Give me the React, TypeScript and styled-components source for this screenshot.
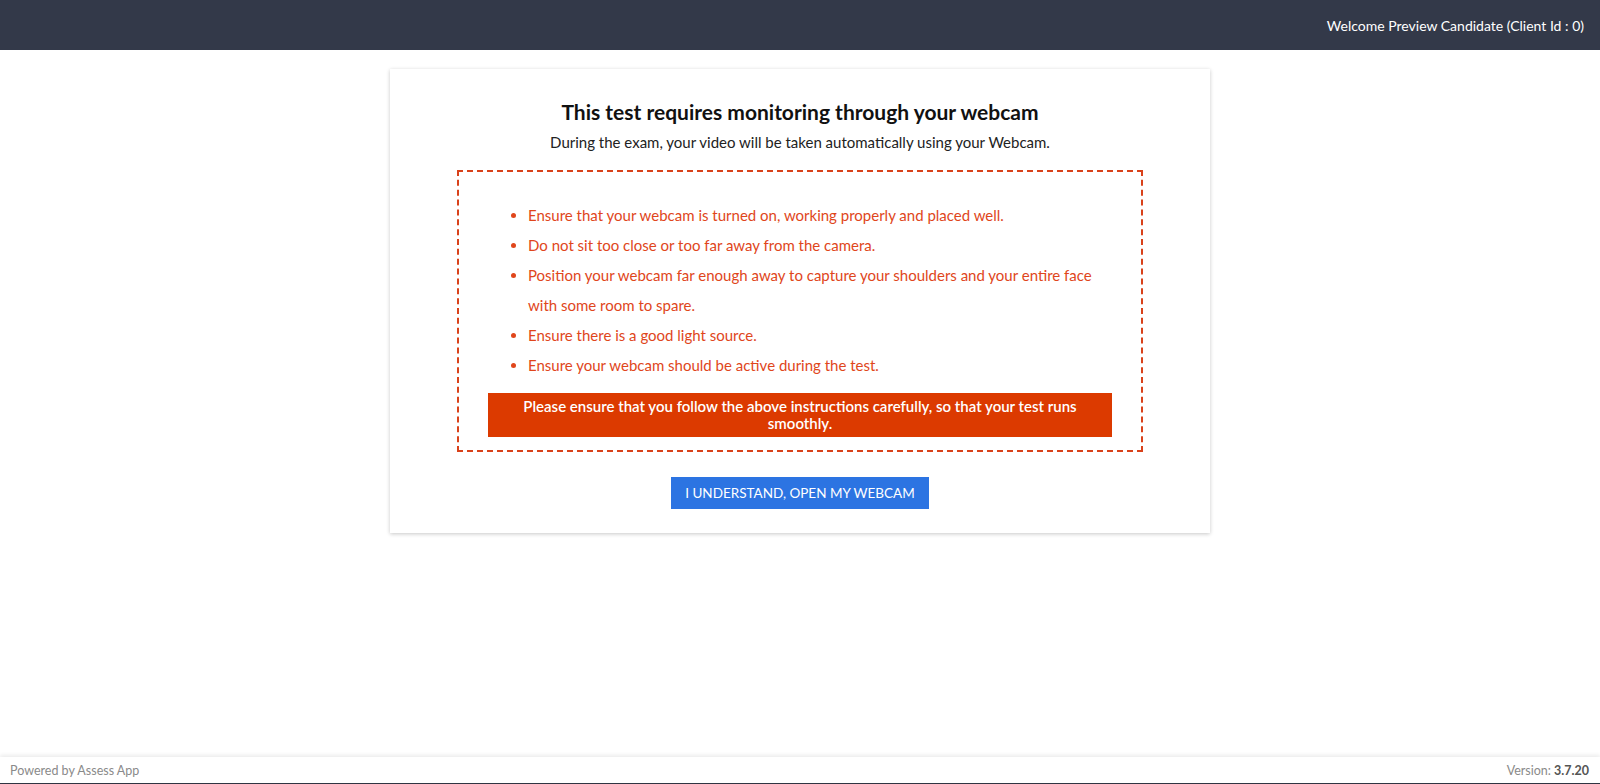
import { createGlobalStyle } from "styled-components";
import styled from "styled-components";

const GlobalStyle = createGlobalStyle`
  html, body {
    margin: 0;
    padding: 0;
    background: #fff;
    font-family: Lato, "Open Sans", Arial, sans-serif;
  }
  * { box-sizing: border-box; }
`;

const instructions = [
  "Ensure that your webcam is turned on, working properly and placed well.",
  "Do not sit too close or too far away from the camera.",
  "Position your webcam far enough away to capture your shoulders and your entire face with some room to spare.",
  "Ensure there is a good light source.",
  "Ensure your webcam should be active during the test.",
];

const Page = styled.div`
  min-height: 784px;
  display: flex;
  flex-direction: column;
`;

const Header = styled.header`
  height: 50px;
  background: #333949;
  color: #fff;
  display: flex;
  align-items: center;
  justify-content: flex-end;
  padding: 0 16px;
  font-size: 14px;
`;

const Main = styled.main`
  flex: 1;
  display: flex;
  justify-content: center;
  align-items: flex-start;
  padding-top: 19px;
`;

const Card = styled.section`
  width: 820px;
  background: #fff;
  box-shadow: 0 1px 4px rgba(0, 0, 0, 0.22);
  padding: 30px 0 24px;
  display: flex;
  flex-direction: column;
  align-items: center;
`;

const Title = styled.h2`
  margin: 0;
  font-size: 21px;
  font-weight: 700;
  color: #111;
  line-height: 26px;
`;

const Subtitle = styled.p`
  margin: 7px 0 0;
  font-size: 15px;
  color: #222;
  line-height: 20px;
`;

const Notice = styled.div`
  margin-top: 18px;
  width: 686px;
  border: 2px dashed #d9411a;
  padding: 28px 29px 13px;
`;

const List = styled.ul`
  margin: 0;
  padding-left: 40px;
  list-style: disc;
  color: #e0461b;
  font-size: 15px;
  line-height: 30px;
`;

const Banner = styled.div`
  margin-top: 13px;
  background: #dc3a00;
  color: #fff;
  text-align: center;
  font-size: 15px;
  font-weight: 600;
  line-height: 17px;
  padding: 5px 14px;
`;

const Button = styled.button`
  margin-top: 25px;
  width: 258px;
  height: 32px;
  border: none;
  background: #2c74e2;
  color: #fff;
  font-family: inherit;
  font-size: 13.5px;
  white-space: nowrap;
  text-transform: uppercase;
  cursor: pointer;
`;

const Footer = styled.footer`
  height: 27px;
  background: #fff;
  box-shadow: 0 -2px 4px rgba(0, 0, 0, 0.08);
  border-bottom: 1px solid #2f3542;
  display: flex;
  align-items: center;
  justify-content: space-between;
  padding: 0 11px 0 10px;
  font-size: 12.5px;
  color: #8a8a8a;
`;

const VersionNumber = styled.b`
  color: #555;
`;

export default function App() {
  return (
    <Page>
      <GlobalStyle />
      <Header>Welcome Preview Candidate (Client Id : 0)</Header>
      <Main>
        <Card>
          <Title>This test requires monitoring through your webcam</Title>
          <Subtitle>
            During the exam, your video will be taken automatically using your Webcam.
          </Subtitle>
          <Notice>
            <List>
              {instructions.map(item => (
                <li key={item}>{item}</li>
              ))}
            </List>
            <Banner>
              Please ensure that you follow the above instructions carefully, so that your test runs smoothly.
            </Banner>
          </Notice>
          <Button>I understand, open my webcam</Button>
        </Card>
      </Main>
      <Footer>
        <span>Powered by Assess App</span>
        <span>
          Version: <VersionNumber>3.7.20</VersionNumber>
        </span>
      </Footer>
    </Page>
  );
}
